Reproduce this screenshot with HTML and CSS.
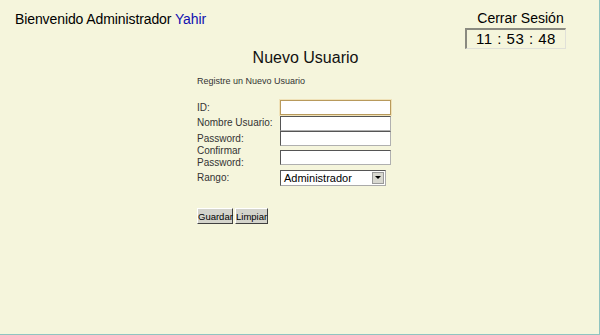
FILE: index.html
```html
<!DOCTYPE html>
<html lang="es">
<head>
    <meta charset="UTF-8">
    <title>Nuevo Usuario</title>
    <link rel="stylesheet" href="styles.css">
</head>
<body>
    <div class="page">
        <!-- Cabecera -->
        <div class="header">
            <div class="welcome">Bienvenido Administrador <span class="user">Yahir</span></div>
            <div class="session">
                <a href="#" class="logout">Cerrar Sesión</a>
                <div class="clock">11 : 53 : 48</div>
            </div>
        </div>

        <h1>Nuevo Usuario</h1>

        <!-- Formulario -->
        <form class="user-form">
            <p class="intro">Registre un Nuevo Usuario</p>
            <div class="fields">
                <label>ID:</label>
                <input type="text" class="focused">
                <label>Nombre Usuario:</label>
                <input type="text">
                <label>Password:</label>
                <input type="password">
                <label>Confirmar Password:</label>
                <input type="password">
                <label>Rango:</label>
                <div class="select">
                    <span>Administrador</span>
                    <span class="arrow"></span>
                </div>
            </div>
            <div class="buttons">
                <button type="button" class="save">Guardar</button>
                <button type="button" class="clear">Limpiar</button>
            </div>
        </form>
    </div>
</body>
</html>
```

FILE: styles.css
```css
/* Global */
html, body {
    margin: 0;
    padding: 0;
    height: 100%;
}

body {
    font-family: 'Liberation Sans', Arial, sans-serif;
    background: #f5f5dc;
    color: #000;
}

.page {
    box-sizing: border-box;
    height: 335px;
    border-right: 1px solid #8fc4c0;
    border-bottom: 1px solid #8fc4c0;
}

/* Header */
.header {
    display: flex;
    justify-content: space-between;
    padding: 10px 33px 0 15px;
}

.welcome {
    font-size: 14px;
    letter-spacing: -0.1px;
    padding-top: 1px;
}

.user {
    color: #1010b0;
}

.session {
    display: flex;
    flex-direction: column;
    align-items: center;
}

.logout {
    color: #000;
    text-decoration: none;
    font-size: 14px;
    padding-left: 10px;
}

.clock {
    margin-top: 2px;
    width: 98px;
    height: 18px;
    border-style: solid;
    border-width: 2px 1px 1px 2px;
    border-color: #8a8a80 #e0e0d8 #e0e0d8 #8a8a80;
    font-size: 15px;
    line-height: 18px;
    text-align: center;
    letter-spacing: 0.5px;
}

h1 {
    margin: 0;
    padding-left: 12px;
    font-size: 16px;
    font-weight: normal;
    text-align: center;
    color: #111;
}

/* Form */
.user-form {
    padding-left: 197px;
    font-size: 10px;
    color: #333;
}

.intro {
    margin: 9px 0 14px;
    font-size: 9px;
}

.fields {
    display: grid;
    grid-template-columns: 83px 111px;
    grid-template-rows: 15px 16px 15px 22px 19px;
    align-items: center;
}

.fields label {
    line-height: 12px;
}

.fields input {
    box-sizing: border-box;
    width: 111px;
    height: 15px;
    margin: 0;
    border: 1px solid #b0b0b0;
    border-top-color: #555;
    border-left-color: #555;
    background: #fff;
    padding: 0;
}

.fields input.focused {
    border: 1px solid #b89a5c;
    box-shadow: 0 0 0 1px #f0e2b8;
}

.select {
    box-sizing: border-box;
    width: 106px;
    height: 16px;
    display: flex;
    justify-content: space-between;
    align-items: center;
    background: #fff;
    border: 1px solid #aaa;
    border-top-color: #555;
    border-left-color: #555;
    font-size: 11px;
    color: #000;
    padding-left: 3px;
}

.arrow {
    width: 12px;
    height: 12px;
    margin-right: 1px;
    background: #d8d8d0;
    border: 1px solid #999;
    box-sizing: border-box;
    position: relative;
}

.arrow::after {
    content: '';
    position: absolute;
    left: 2px;
    top: 3px;
    border-left: 3px solid transparent;
    border-right: 3px solid transparent;
    border-top: 3px solid #000;
}

.buttons {
    margin-top: 21px;
    display: flex;
    gap: 2px;
}

.buttons button {
    font-family: 'Liberation Sans', Arial, sans-serif;
    font-size: 9.5px;
    color: #000;
    background: #d4d4cc;
    padding: 0;
    height: 16px;
    border: 1px solid;
    border-color: #fff #404040 #404040 #fff;
}

.buttons .save {
    width: 36px;
}

.buttons .clear {
    width: 33px;
}
```
